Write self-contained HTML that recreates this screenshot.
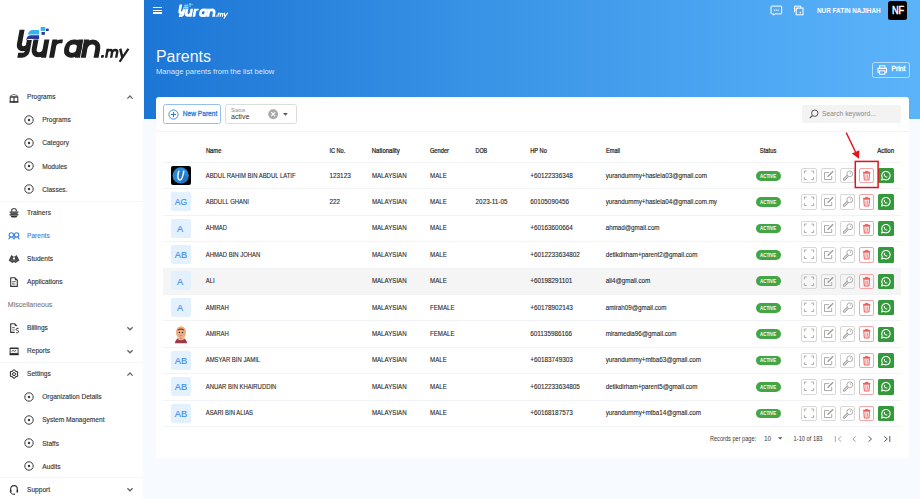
<!DOCTYPE html>
<html><head><meta charset="utf-8"><style>
html,body{margin:0;padding:0;}
body{width:920px;height:499px;overflow:hidden;position:relative;background:#fff;font-family:"Liberation Sans",sans-serif;}
.b{position:absolute;}
svg.b{overflow:visible;}
#tx{position:absolute;left:0;top:0;}
#tx text{font-family:"Liberation Sans",sans-serif;}
</style></head><body>
<div class="b" style="left:0px;top:0px;width:144px;height:499px;background:#fff;"></div>
<svg class="b" style="left:0px;top:0px" width="144" height="70" viewBox="0 0 144 70"><g transform="matrix(1,0,-0.185,1,10.675,0)" fill="none" stroke="#1f1f1f" stroke-width="5.0"><path d="M16.9 29.7 V44.2 A4.6 4.6 0 0 0 26.1 44.2 M26.1 40 V51 A4.2 4.2 0 0 1 21.9 55.2 H17.3" /><path d="M32.65 39.5 V49.35 A5.45 5.45 0 0 0 43.55 49.35 V39.5 M43.55 49 V57.7"/><path d="M51.55 57.7 V39.5"/><path d="M51.8 46.5 Q52.6 41.4 57.5 41.4 H59.6" stroke-width="3.6"/><rect x="65.1" y="42" width="12.35" height="13.2" rx="5.6"/><path d="M77.45 39.5 V57.7"/><path d="M83.25 57.7 V39.5 M83.25 48.5 A6.4 6.4 0 0 1 96.05 48.5 V57.7"/></g><g transform="matrix(1,0,-0.185,1,10.675,0)" fill="none" stroke="#1f1f1f" stroke-width="2.40"><path d="M106.1 57.7 V48.8 M106.1 52.6 A2.525 2.525 0 0 1 111.15 52.6 V57.7 M111.15 52.6 A2.525 2.525 0 0 1 116.2 52.6 V57.7"/><path d="M118.6 48.8 L122.2 57.2 M126.8 48.8 L120.4 61.8"/></g><g transform="matrix(1,0,-0.185,1,10.675,0)" fill="#1f1f1f"><rect x="100.8" y="55.1" width="2.8" height="2.6" rx="0.6"/></g><path d="M28 34.6 Q28.4 30 33 30 H39.1 V34.6 Z" fill="#35b3ee"/><path d="M26.3 40.2 Q26.6 35.3 31 35.3 H39.1 V39.1 H29.5 Q27.2 39.2 26.3 40.2 Z" fill="#2b3a9a"/><rect x="40.7" y="27" width="4.6" height="3.9" fill="#35b3ee"/><rect x="46" y="28.6" width="2.7" height="2.4" fill="#2b3a9a"/><rect x="41.5" y="32" width="3.4" height="2.8" fill="#2b3a9a"/></svg>
<svg class="b" style="left:8.5px;top:92.5px" width="11" height="10" viewBox="0 0 11 10"><path d="M1.3 2.7 Q5 0.2 8.7 2.7" fill="none" stroke="#777" stroke-width="1"/><path d="M0.9 3.5 H9.1" stroke="#555" stroke-width="0.8"/><rect x="1.2" y="4.2" width="7.6" height="4.8" fill="none" stroke="#333" stroke-width="1"/><path d="M5 4.2 V9.4" stroke="#222" stroke-width="1"/><path d="M0.7 8.9 H9.3" stroke="#222" stroke-width="1.2"/></svg>
<svg class="b" style="left:127px;top:94.9px" width="6" height="5" viewBox="0 0 6 5"><path d="M0.4 3.6 L3 1 L5.6 3.6" fill="none" stroke="#666" stroke-width="1.3"/></svg>
<svg class="b" style="left:24px;top:114.98px" width="10" height="10" viewBox="0 0 10 10"><circle cx="5" cy="5" r="4.2" fill="none" stroke="#3a3a3a" stroke-width="1"/><circle cx="5" cy="5" r="1.2" fill="#3a3a3a"/></svg>
<svg class="b" style="left:24px;top:138.06px" width="10" height="10" viewBox="0 0 10 10"><circle cx="5" cy="5" r="4.2" fill="none" stroke="#3a3a3a" stroke-width="1"/><circle cx="5" cy="5" r="1.2" fill="#3a3a3a"/></svg>
<svg class="b" style="left:24px;top:161.14px" width="10" height="10" viewBox="0 0 10 10"><circle cx="5" cy="5" r="4.2" fill="none" stroke="#3a3a3a" stroke-width="1"/><circle cx="5" cy="5" r="1.2" fill="#3a3a3a"/></svg>
<svg class="b" style="left:24px;top:184.22px" width="10" height="10" viewBox="0 0 10 10"><circle cx="5" cy="5" r="4.2" fill="none" stroke="#3a3a3a" stroke-width="1"/><circle cx="5" cy="5" r="1.2" fill="#3a3a3a"/></svg>
<svg class="b" style="left:8.5px;top:207.9px" width="11" height="10" viewBox="0 0 11 10"><path d="M2.8 3.6 V2 Q2.8 0.8 4 0.8 H6 Q7.2 0.8 7.2 2 V3.6" fill="none" stroke="#333" stroke-width="1.1"/><rect x="0.4" y="3.4" width="9.2" height="1.3" rx="0.65" fill="#333"/><rect x="1.4" y="4.6" width="7.2" height="2" fill="#555"/><rect x="0.4" y="6.3" width="9.2" height="1.1" rx="0.55" fill="#333"/><path d="M1.6 7.8 H8.4 Q8.2 9.4 6.6 9.4 H3.4 Q1.8 9.4 1.6 7.8 Z" fill="#333"/></svg>
<svg class="b" style="left:8.5px;top:230.98px" width="11" height="10" viewBox="0 0 11 10"><circle cx="2.3" cy="3.9" r="2.2" fill="none" stroke="#3d86e0" stroke-width="1.1"/><circle cx="7.6" cy="3.9" r="2.2" fill="none" stroke="#3d86e0" stroke-width="1.1"/><path d="M-0.1 7.8 L1.3 5.9 M3.3 5.9 L4.95 7.8 L6.6 5.9 M8.6 5.9 L10.1 7.8" fill="none" stroke="#3d86e0" stroke-width="1.1" stroke-linecap="round"/></svg>
<svg class="b" style="left:8.5px;top:254.06px" width="11" height="10" viewBox="0 0 11 10"><path d="M-0.3 6.6 L2.4 1 L4.2 2.6 L5.8 2.6 L7.6 1 L10.4 6.6 L8 7.9 L6.6 9 L5 8 L3.4 9 L2 7.9 Z" fill="#454545"/><circle cx="5" cy="4.4" r="1.1" fill="#fff"/><path d="M2 6.1 H8" stroke="#999" stroke-width="0.6"/></svg>
<svg class="b" style="left:8.5px;top:277.14px" width="11" height="10" viewBox="0 0 11 10"><path d="M1.7 0.8 H5.9 L8.3 3.2 V9.4 H1.7 Z" fill="none" stroke="#333" stroke-width="1.1" stroke-linejoin="round"/><path d="M5.9 0.8 L8.3 3.2 H5.9 Z" fill="#333"/><path d="M3.2 4.6 H6.6" stroke="#444" stroke-width="0.8"/><rect x="3.2" y="5.7" width="3.4" height="2.4" fill="#c4c4c4"/><path d="M4 5.6 V7.8" stroke="#555" stroke-width="0.7"/></svg>
<svg class="b" style="left:8.5px;top:323.3px" width="11" height="10" viewBox="0 0 11 10"><path d="M7.8 3 L5.8 0.8 H1.7 V9.4 H5.6" fill="none" stroke="#333" stroke-width="1.1" stroke-linejoin="round"/><path d="M5.8 0.8 L7.8 3 H5.8 Z" fill="#333"/><path d="M3.2 4.6 H5.8" stroke="#444" stroke-width="0.8"/><rect x="3.2" y="5.7" width="2.8" height="2.4" fill="#c4c4c4"/><path d="M9.6 5.3 Q7.3 5 7.1 6.3 Q7.1 7.2 8.5 7.5 Q10 7.9 9.6 9 Q9 9.9 7.2 9.7" fill="none" stroke="#333" stroke-width="1"/></svg>
<svg class="b" style="left:127px;top:325.7px" width="6" height="5" viewBox="0 0 6 5"><path d="M0.4 1.2 L3 3.8 L5.6 1.2" fill="none" stroke="#666" stroke-width="1.3"/></svg>
<svg class="b" style="left:8.5px;top:346.38px" width="11" height="10" viewBox="0 0 11 10"><rect x="1.1" y="2.4" width="8" height="5" fill="none" stroke="#444" stroke-width="1"/><path d="M1 2.2 H9.2" stroke="#222" stroke-width="1.2"/><path d="M0.5 8.4 H9.7" stroke="#222" stroke-width="1.6"/><path d="M2.8 5.6 Q3.6 3.6 4.7 4.8 Q5.7 6 7.2 4.2" fill="none" stroke="#333" stroke-width="0.9"/></svg>
<svg class="b" style="left:127px;top:348.78px" width="6" height="5" viewBox="0 0 6 5"><path d="M0.4 1.2 L3 3.8 L5.6 1.2" fill="none" stroke="#666" stroke-width="1.3"/></svg>
<svg class="b" style="left:8.5px;top:369.46px" width="11" height="10" viewBox="0 0 11 10"><path d="M3.40 2.23 Q5.00 -0.60 6.60 2.23 Q9.85 2.20 8.20 5.00 Q9.85 7.80 6.60 7.77 Q5.00 10.60 3.40 7.77 Q0.15 7.80 1.80 5.00 Q0.15 2.20 3.40 2.23 Z" fill="none" stroke="#333" stroke-width="1.1" stroke-linejoin="round"/><circle cx="5" cy="5.1" r="1.5" fill="none" stroke="#333" stroke-width="1"/></svg>
<svg class="b" style="left:127px;top:371.86px" width="6" height="5" viewBox="0 0 6 5"><path d="M0.4 3.6 L3 1 L5.6 3.6" fill="none" stroke="#666" stroke-width="1.3"/></svg>
<svg class="b" style="left:24px;top:391.94px" width="10" height="10" viewBox="0 0 10 10"><circle cx="5" cy="5" r="4.2" fill="none" stroke="#3a3a3a" stroke-width="1"/><circle cx="5" cy="5" r="1.2" fill="#3a3a3a"/></svg>
<svg class="b" style="left:24px;top:415.02px" width="10" height="10" viewBox="0 0 10 10"><circle cx="5" cy="5" r="4.2" fill="none" stroke="#3a3a3a" stroke-width="1"/><circle cx="5" cy="5" r="1.2" fill="#3a3a3a"/></svg>
<svg class="b" style="left:24px;top:438.1px" width="10" height="10" viewBox="0 0 10 10"><circle cx="5" cy="5" r="4.2" fill="none" stroke="#3a3a3a" stroke-width="1"/><circle cx="5" cy="5" r="1.2" fill="#3a3a3a"/></svg>
<svg class="b" style="left:24px;top:461.18px" width="10" height="10" viewBox="0 0 10 10"><circle cx="5" cy="5" r="4.2" fill="none" stroke="#3a3a3a" stroke-width="1"/><circle cx="5" cy="5" r="1.2" fill="#3a3a3a"/></svg>
<svg class="b" style="left:8.5px;top:484.86px" width="11" height="10" viewBox="0 0 11 10"><path d="M1.6 6.2 V4.6 Q1.6 0.6 5 0.6 Q8.4 0.6 8.4 4.6 V6.2" fill="none" stroke="#333" stroke-width="1.1"/><rect x="0.9" y="4.4" width="1.6" height="3.4" rx="0.7" fill="#333"/><rect x="7.5" y="4.4" width="1.6" height="3.4" rx="0.7" fill="#333"/><path d="M1.9 7.5 Q2.4 9.3 4.6 9.4" fill="none" stroke="#333" stroke-width="0.9"/><circle cx="5.2" cy="9.3" r="0.8" fill="#222"/></svg>
<svg class="b" style="left:127px;top:487.26px" width="6" height="5" viewBox="0 0 6 5"><path d="M0.4 1.2 L3 3.8 L5.6 1.2" fill="none" stroke="#666" stroke-width="1.3"/></svg>
<div class="b" style="left:0px;top:201px;width:143px;height:1px;background:#f4f6f9;"></div>
<div class="b" style="left:0px;top:362px;width:143px;height:1px;background:#f4f6f9;"></div>
<div class="b" style="left:0px;top:477px;width:143px;height:1px;background:#f4f6f9;"></div>
<div class="b" style="left:143px;top:0px;width:777px;height:499px;background:#f7faff;"></div>
<div class="b" style="left:144px;top:0px;width:776px;height:118.5px;background:linear-gradient(90deg,#1c76d5 0%,#3d97e8 50%,#5bb3fa 100%);"></div>
<div class="b" style="left:144px;top:118.5px;width:776px;height:1.4px;background:#fff;"></div>
<div class="b" style="left:153.4px;top:6.6499999999999995px;width:8.8px;height:1.3px;background:#fff;"></div>
<div class="b" style="left:153.4px;top:9.65px;width:8.8px;height:1.3px;background:#fff;"></div>
<div class="b" style="left:153.4px;top:12.45px;width:8.8px;height:1.3px;background:#fff;"></div>
<svg class="b" style="left:144px;top:0px" width="100" height="24" viewBox="0 0 100 24"><g transform="translate(27.188 -8.668) scale(0.44)"><g transform="matrix(1,0,-0.185,1,10.675,0)" fill="none" stroke="#fff" stroke-width="6.0"><path d="M16.9 29.7 V44.2 A4.6 4.6 0 0 0 26.1 44.2 M26.1 40 V51 A4.2 4.2 0 0 1 21.9 55.2 H17.3" /><path d="M32.65 39.5 V49.35 A5.45 5.45 0 0 0 43.55 49.35 V39.5 M43.55 49 V57.7"/><path d="M51.55 57.7 V39.5"/><path d="M51.8 46.5 Q52.6 41.4 57.5 41.4 H59.6" stroke-width="3.6"/><rect x="65.1" y="42" width="12.35" height="13.2" rx="5.6"/><path d="M77.45 39.5 V57.7"/><path d="M83.25 57.7 V39.5 M83.25 48.5 A6.4 6.4 0 0 1 96.05 48.5 V57.7"/></g><g transform="matrix(1,0,-0.185,1,10.675,0)" fill="none" stroke="#fff" stroke-width="2.88"><path d="M106.1 57.7 V48.8 M106.1 52.6 A2.525 2.525 0 0 1 111.15 52.6 V57.7 M111.15 52.6 A2.525 2.525 0 0 1 116.2 52.6 V57.7"/><path d="M118.6 48.8 L122.2 57.2 M126.8 48.8 L120.4 61.8"/></g><g transform="matrix(1,0,-0.185,1,10.675,0)" fill="#fff"><rect x="100.8" y="55.1" width="2.8" height="2.6" rx="0.6"/></g><path d="M28 34.6 Q28.4 30 33 30 H39.1 V34.6 Z" fill="#63d3ff"/><path d="M26.3 40.2 Q26.6 35.3 31 35.3 H39.1 V39.1 H29.5 Q27.2 39.2 26.3 40.2 Z" fill="#8fd8ff"/><rect x="40.7" y="27" width="4.6" height="3.9" fill="#63d3ff"/><rect x="46" y="28.6" width="2.7" height="2.4" fill="#8fd8ff"/><rect x="41.5" y="32" width="3.4" height="2.8" fill="#8fd8ff"/></g></svg>
<svg class="b" style="left:770px;top:5px" width="13" height="12" viewBox="0 0 13 12"><path d="M1.6 1.1 H11.1 Q11.7 1.1 11.7 1.7 V8.3 Q11.7 8.9 11.1 8.9 H4.9 L3.6 10.2 V8.9 H1.6 Q1 8.9 1 8.3 V1.7 Q1 1.1 1.6 1.1 Z" fill="none" stroke="#fff" stroke-width="1" stroke-linejoin="round"/><path d="M3.9 5.1 H8.9" stroke="rgba(255,255,255,0.85)" stroke-width="1.3" stroke-dasharray="1.3 0.5"/></svg>
<svg class="b" style="left:793px;top:5px" width="11" height="11" viewBox="0 0 11 11"><path d="M1.5 7.2 V1.1 H7.8 V3.1" fill="none" stroke="#fff" stroke-width="1"/><rect x="3.2" y="3.1" width="6.8" height="6.7" fill="none" stroke="#fff" stroke-width="1"/><path d="M2.8 5.6 L4.9 2.4" stroke="#fff" stroke-width="0.8"/><circle cx="7.3" cy="7.6" r="0.8" fill="#fff"/></svg>
<div class="b" style="left:888.3px;top:1px;width:19.2px;height:18.8px;background:#000;border-radius:2.5px;"></div>
<div class="b" style="left:872.1px;top:61.5px;width:37.8px;height:16px;border:1px solid rgba(255,255,255,0.55);border-radius:2.5px;box-sizing:border-box;"></div>
<svg class="b" style="left:876.5px;top:64.5px" width="10.5" height="10" viewBox="0 0 10.5 10"><rect x="2.6" y="0.8" width="5.3" height="2.6" fill="none" stroke="#fff" stroke-width="1"/><path d="M2.6 7.2 H1 V3.4 H9.5 V7.2 H7.9" fill="none" stroke="#fff" stroke-width="1.1"/><rect x="2.6" y="5.8" width="5.3" height="3.4" fill="none" stroke="#fff" stroke-width="1"/></svg>
<div class="b" style="left:155.5px;top:96.5px;width:753.5px;height:361px;background:#fff;border-radius:3px;"></div>
<div class="b" style="left:155.5px;top:130.6px;width:753.5px;height:1px;background:#f1f3f6;"></div>
<div class="b" style="left:163.2px;top:104.2px;width:58.1px;height:19.4px;border:1px solid #94bff0;border-radius:2.5px;box-sizing:border-box;"></div>
<svg class="b" style="left:167.5px;top:108.5px" width="11" height="11" viewBox="0 0 11 11"><circle cx="5.5" cy="5.5" r="4.6" fill="none" stroke="#2f7fdc" stroke-width="0.9"/><path d="M5.5 3 V8 M3 5.5 H8" stroke="#2f7fdc" stroke-width="1"/></svg>
<div class="b" style="left:225.2px;top:104.3px;width:71.5px;height:19.4px;border:1px solid #dcdcdc;border-radius:2.5px;box-sizing:border-box;"></div>
<svg class="b" style="left:268px;top:108.8px" width="10.4" height="10.4" viewBox="0 0 10.4 10.4"><circle cx="5.2" cy="5.2" r="4.9" fill="#a9a9a9"/><path d="M3.2 3.2 L7.2 7.2 M7.2 3.2 L3.2 7.2" stroke="#fff" stroke-width="1.1"/></svg>
<svg class="b" style="left:283.4px;top:112.8px" width="5" height="3" viewBox="0 0 5 3"><path d="M0 0 H4.8 L2.4 2.8 Z" fill="#555"/></svg>
<div class="b" style="left:802.3px;top:104.8px;width:98.7px;height:18.7px;background:#f3f3f3;border-radius:2px;"></div>
<svg class="b" style="left:808.5px;top:109px" width="10" height="10" viewBox="0 0 10 10"><circle cx="5.8" cy="4.2" r="3.2" fill="none" stroke="#555" stroke-width="1"/><path d="M3.5 6.5 L0.8 9.2" stroke="#555" stroke-width="1.1"/></svg>
<div class="b" style="left:163.4px;top:161.8px;width:738px;height:1px;background:#f1f3f6;"></div>
<div class="b" style="left:163.4px;top:188.23px;width:738px;height:1px;background:#f1f3f6;"></div>
<div class="b" style="left:171.1px;top:165.91px;width:19.8px;height:19.0px;background:#000;border-radius:2px;"></div>
<svg class="b" style="left:171.1px;top:165.91px" width="19.8" height="19.0" viewBox="0 0 19.8 19.0"><circle cx="9.7" cy="9.4" r="8.1" fill="#2a88d8"/><path d="M8.6 4.5 L17.5 12 A8.1 8.1 0 0 1 12 17.2 L6.5 14 Z" fill="#1c66ad" opacity="0.55"/><path d="M7.8 5.2 Q6.8 8 6.9 11 Q7.1 14.2 9.3 14 Q11.4 13.6 12.8 5.2" fill="none" stroke="#e9f0f6" stroke-width="1.6" stroke-linecap="round"/></svg>
<div class="b" style="left:755.7px;top:170.86px;width:24.9px;height:9.7px;background:#43a546;border-radius:5px;"></div>
<div class="b" style="left:801.3px;top:167.96px;width:15.5px;height:15.5px;border:1px solid #d8d8d8;border-radius:2px;box-sizing:border-box;"></div>
<div class="b" style="left:820.5px;top:167.96px;width:15.5px;height:15.5px;border:1px solid #d8d8d8;border-radius:2px;box-sizing:border-box;"></div>
<div class="b" style="left:839.7px;top:167.96px;width:15.5px;height:15.5px;border:1px solid #d8d8d8;border-radius:2px;box-sizing:border-box;"></div>
<svg class="b" style="left:801.3px;top:167.96px" width="15.5" height="15.5" viewBox="0 0 15.5 15.5"><path d="M3.4 5.4 V3.05 H5.7 M10.3 3.05 H12.6 V5.4 M12.6 9.2 V11.55 H10.3 M5.7 11.55 H3.4 V9.2" fill="none" stroke="#9c9c9c" stroke-width="0.85"/></svg>
<svg class="b" style="left:820.5px;top:167.96px" width="15.5" height="15.5" viewBox="0 0 15.5 15.5"><path d="M8.2 4.6 H3.5 V11.55 H10.7 V8" fill="none" stroke="#9c9c9c" stroke-width="0.85"/><path d="M6.6 8.7 L12.1 3.2" stroke="#9c9c9c" stroke-width="1.4"/></svg>
<svg class="b" style="left:839.7px;top:167.96px" width="15.5" height="15.5" viewBox="0 0 15.5 15.5"><path d="M8.1 7.5 L4.1 11.5" stroke="#a0a0a0" stroke-width="2.5" stroke-linecap="round"/><path d="M8.1 7.5 L4.1 11.5" stroke="#fff" stroke-width="0.9" stroke-linecap="round"/><circle cx="9.8" cy="5.8" r="2.9" fill="#fff" stroke="#a0a0a0" stroke-width="0.85"/><circle cx="10.4" cy="5.1" r="0.65" fill="#a0a0a0"/></svg>
<div class="b" style="left:858.9px;top:167.96px;width:15.3px;height:15.5px;border:1px solid #f4a5a5;border-radius:2px;box-sizing:border-box;"></div>
<svg class="b" style="left:858.9px;top:167.96px" width="15.3" height="15.5" viewBox="0 0 15.3 15.5"><path d="M4.8 5.2 H10.5 L10 12 H5.3 Z" fill="none" stroke="#ef4444" stroke-width="0.9"/><path d="M4 4.4 H11.3 M6.4 4.2 V3.4 H8.9 V4.2" fill="none" stroke="#ef4444" stroke-width="0.9"/><path d="M6.9 6.5 V10.8 M8.4 6.5 V10.8" stroke="#ef4444" stroke-width="0.6"/></svg>
<div class="b" style="left:878.2px;top:168.06px;width:15.4px;height:15.3px;background:#33993a;border-radius:1.5px;"></div>
<svg class="b" style="left:878.4px;top:167.96px" width="15" height="15.5" viewBox="0 0 15 15.5"><path d="M3.6 12 L4.3 9.7 A4.2 4.2 0 1 1 5.9 11.3 Z" fill="none" stroke="#fff" stroke-width="1.05" stroke-linejoin="round"/><path d="M5.9 6.3 Q6.2 5.6 6.7 6 L7.1 6.8 L6.8 7.3 Q7.4 8.3 8.2 8.7 L8.7 8.3 L9.4 8.7 Q9.6 9.2 9 9.5 Q7.6 9.8 6.4 8.3 Q5.6 7.2 5.9 6.3 Z" fill="#fff"/></svg>
<div class="b" style="left:163.4px;top:214.66px;width:738px;height:1px;background:#f1f3f6;"></div>
<div class="b" style="left:171.1px;top:192.22px;width:19.5px;height:19.0px;background:#e3f0fd;border-radius:2px;"></div>
<div class="b" style="left:755.7px;top:197.27px;width:24.9px;height:9.7px;background:#43a546;border-radius:5px;"></div>
<div class="b" style="left:801.3px;top:194.37px;width:15.5px;height:15.5px;border:1px solid #d8d8d8;border-radius:2px;box-sizing:border-box;"></div>
<div class="b" style="left:820.5px;top:194.37px;width:15.5px;height:15.5px;border:1px solid #d8d8d8;border-radius:2px;box-sizing:border-box;"></div>
<div class="b" style="left:839.7px;top:194.37px;width:15.5px;height:15.5px;border:1px solid #d8d8d8;border-radius:2px;box-sizing:border-box;"></div>
<svg class="b" style="left:801.3px;top:194.37px" width="15.5" height="15.5" viewBox="0 0 15.5 15.5"><path d="M3.4 5.4 V3.05 H5.7 M10.3 3.05 H12.6 V5.4 M12.6 9.2 V11.55 H10.3 M5.7 11.55 H3.4 V9.2" fill="none" stroke="#9c9c9c" stroke-width="0.85"/></svg>
<svg class="b" style="left:820.5px;top:194.37px" width="15.5" height="15.5" viewBox="0 0 15.5 15.5"><path d="M8.2 4.6 H3.5 V11.55 H10.7 V8" fill="none" stroke="#9c9c9c" stroke-width="0.85"/><path d="M6.6 8.7 L12.1 3.2" stroke="#9c9c9c" stroke-width="1.4"/></svg>
<svg class="b" style="left:839.7px;top:194.37px" width="15.5" height="15.5" viewBox="0 0 15.5 15.5"><path d="M8.1 7.5 L4.1 11.5" stroke="#a0a0a0" stroke-width="2.5" stroke-linecap="round"/><path d="M8.1 7.5 L4.1 11.5" stroke="#fff" stroke-width="0.9" stroke-linecap="round"/><circle cx="9.8" cy="5.8" r="2.9" fill="#fff" stroke="#a0a0a0" stroke-width="0.85"/><circle cx="10.4" cy="5.1" r="0.65" fill="#a0a0a0"/></svg>
<div class="b" style="left:858.9px;top:194.37px;width:15.3px;height:15.5px;border:1px solid #f4a5a5;border-radius:2px;box-sizing:border-box;"></div>
<svg class="b" style="left:858.9px;top:194.37px" width="15.3" height="15.5" viewBox="0 0 15.3 15.5"><path d="M4.8 5.2 H10.5 L10 12 H5.3 Z" fill="none" stroke="#ef4444" stroke-width="0.9"/><path d="M4 4.4 H11.3 M6.4 4.2 V3.4 H8.9 V4.2" fill="none" stroke="#ef4444" stroke-width="0.9"/><path d="M6.9 6.5 V10.8 M8.4 6.5 V10.8" stroke="#ef4444" stroke-width="0.6"/></svg>
<div class="b" style="left:878.2px;top:194.47px;width:15.4px;height:15.3px;background:#33993a;border-radius:1.5px;"></div>
<svg class="b" style="left:878.4px;top:194.37px" width="15" height="15.5" viewBox="0 0 15 15.5"><path d="M3.6 12 L4.3 9.7 A4.2 4.2 0 1 1 5.9 11.3 Z" fill="none" stroke="#fff" stroke-width="1.05" stroke-linejoin="round"/><path d="M5.9 6.3 Q6.2 5.6 6.7 6 L7.1 6.8 L6.8 7.3 Q7.4 8.3 8.2 8.7 L8.7 8.3 L9.4 8.7 Q9.6 9.2 9 9.5 Q7.6 9.8 6.4 8.3 Q5.6 7.2 5.9 6.3 Z" fill="#fff"/></svg>
<div class="b" style="left:163.4px;top:241.09px;width:738px;height:1px;background:#f1f3f6;"></div>
<div class="b" style="left:171.1px;top:218.62px;width:19.5px;height:19.0px;background:#e3f0fd;border-radius:2px;"></div>
<div class="b" style="left:755.7px;top:223.68px;width:24.9px;height:9.7px;background:#43a546;border-radius:5px;"></div>
<div class="b" style="left:801.3px;top:220.78px;width:15.5px;height:15.5px;border:1px solid #d8d8d8;border-radius:2px;box-sizing:border-box;"></div>
<div class="b" style="left:820.5px;top:220.78px;width:15.5px;height:15.5px;border:1px solid #d8d8d8;border-radius:2px;box-sizing:border-box;"></div>
<div class="b" style="left:839.7px;top:220.78px;width:15.5px;height:15.5px;border:1px solid #d8d8d8;border-radius:2px;box-sizing:border-box;"></div>
<svg class="b" style="left:801.3px;top:220.78px" width="15.5" height="15.5" viewBox="0 0 15.5 15.5"><path d="M3.4 5.4 V3.05 H5.7 M10.3 3.05 H12.6 V5.4 M12.6 9.2 V11.55 H10.3 M5.7 11.55 H3.4 V9.2" fill="none" stroke="#9c9c9c" stroke-width="0.85"/></svg>
<svg class="b" style="left:820.5px;top:220.78px" width="15.5" height="15.5" viewBox="0 0 15.5 15.5"><path d="M8.2 4.6 H3.5 V11.55 H10.7 V8" fill="none" stroke="#9c9c9c" stroke-width="0.85"/><path d="M6.6 8.7 L12.1 3.2" stroke="#9c9c9c" stroke-width="1.4"/></svg>
<svg class="b" style="left:839.7px;top:220.78px" width="15.5" height="15.5" viewBox="0 0 15.5 15.5"><path d="M8.1 7.5 L4.1 11.5" stroke="#a0a0a0" stroke-width="2.5" stroke-linecap="round"/><path d="M8.1 7.5 L4.1 11.5" stroke="#fff" stroke-width="0.9" stroke-linecap="round"/><circle cx="9.8" cy="5.8" r="2.9" fill="#fff" stroke="#a0a0a0" stroke-width="0.85"/><circle cx="10.4" cy="5.1" r="0.65" fill="#a0a0a0"/></svg>
<div class="b" style="left:858.9px;top:220.78px;width:15.3px;height:15.5px;border:1px solid #f4a5a5;border-radius:2px;box-sizing:border-box;"></div>
<svg class="b" style="left:858.9px;top:220.78px" width="15.3" height="15.5" viewBox="0 0 15.3 15.5"><path d="M4.8 5.2 H10.5 L10 12 H5.3 Z" fill="none" stroke="#ef4444" stroke-width="0.9"/><path d="M4 4.4 H11.3 M6.4 4.2 V3.4 H8.9 V4.2" fill="none" stroke="#ef4444" stroke-width="0.9"/><path d="M6.9 6.5 V10.8 M8.4 6.5 V10.8" stroke="#ef4444" stroke-width="0.6"/></svg>
<div class="b" style="left:878.2px;top:220.88px;width:15.4px;height:15.3px;background:#33993a;border-radius:1.5px;"></div>
<svg class="b" style="left:878.4px;top:220.78px" width="15" height="15.5" viewBox="0 0 15 15.5"><path d="M3.6 12 L4.3 9.7 A4.2 4.2 0 1 1 5.9 11.3 Z" fill="none" stroke="#fff" stroke-width="1.05" stroke-linejoin="round"/><path d="M5.9 6.3 Q6.2 5.6 6.7 6 L7.1 6.8 L6.8 7.3 Q7.4 8.3 8.2 8.7 L8.7 8.3 L9.4 8.7 Q9.6 9.2 9 9.5 Q7.6 9.8 6.4 8.3 Q5.6 7.2 5.9 6.3 Z" fill="#fff"/></svg>
<div class="b" style="left:163.4px;top:267.52px;width:738px;height:1px;background:#f1f3f6;"></div>
<div class="b" style="left:171.1px;top:245.04px;width:19.5px;height:19.0px;background:#e3f0fd;border-radius:2px;"></div>
<div class="b" style="left:755.7px;top:250.09px;width:24.9px;height:9.7px;background:#43a546;border-radius:5px;"></div>
<div class="b" style="left:801.3px;top:247.19px;width:15.5px;height:15.5px;border:1px solid #d8d8d8;border-radius:2px;box-sizing:border-box;"></div>
<div class="b" style="left:820.5px;top:247.19px;width:15.5px;height:15.5px;border:1px solid #d8d8d8;border-radius:2px;box-sizing:border-box;"></div>
<div class="b" style="left:839.7px;top:247.19px;width:15.5px;height:15.5px;border:1px solid #d8d8d8;border-radius:2px;box-sizing:border-box;"></div>
<svg class="b" style="left:801.3px;top:247.19px" width="15.5" height="15.5" viewBox="0 0 15.5 15.5"><path d="M3.4 5.4 V3.05 H5.7 M10.3 3.05 H12.6 V5.4 M12.6 9.2 V11.55 H10.3 M5.7 11.55 H3.4 V9.2" fill="none" stroke="#9c9c9c" stroke-width="0.85"/></svg>
<svg class="b" style="left:820.5px;top:247.19px" width="15.5" height="15.5" viewBox="0 0 15.5 15.5"><path d="M8.2 4.6 H3.5 V11.55 H10.7 V8" fill="none" stroke="#9c9c9c" stroke-width="0.85"/><path d="M6.6 8.7 L12.1 3.2" stroke="#9c9c9c" stroke-width="1.4"/></svg>
<svg class="b" style="left:839.7px;top:247.19px" width="15.5" height="15.5" viewBox="0 0 15.5 15.5"><path d="M8.1 7.5 L4.1 11.5" stroke="#a0a0a0" stroke-width="2.5" stroke-linecap="round"/><path d="M8.1 7.5 L4.1 11.5" stroke="#fff" stroke-width="0.9" stroke-linecap="round"/><circle cx="9.8" cy="5.8" r="2.9" fill="#fff" stroke="#a0a0a0" stroke-width="0.85"/><circle cx="10.4" cy="5.1" r="0.65" fill="#a0a0a0"/></svg>
<div class="b" style="left:858.9px;top:247.19px;width:15.3px;height:15.5px;border:1px solid #f4a5a5;border-radius:2px;box-sizing:border-box;"></div>
<svg class="b" style="left:858.9px;top:247.19px" width="15.3" height="15.5" viewBox="0 0 15.3 15.5"><path d="M4.8 5.2 H10.5 L10 12 H5.3 Z" fill="none" stroke="#ef4444" stroke-width="0.9"/><path d="M4 4.4 H11.3 M6.4 4.2 V3.4 H8.9 V4.2" fill="none" stroke="#ef4444" stroke-width="0.9"/><path d="M6.9 6.5 V10.8 M8.4 6.5 V10.8" stroke="#ef4444" stroke-width="0.6"/></svg>
<div class="b" style="left:878.2px;top:247.29px;width:15.4px;height:15.3px;background:#33993a;border-radius:1.5px;"></div>
<svg class="b" style="left:878.4px;top:247.19px" width="15" height="15.5" viewBox="0 0 15 15.5"><path d="M3.6 12 L4.3 9.7 A4.2 4.2 0 1 1 5.9 11.3 Z" fill="none" stroke="#fff" stroke-width="1.05" stroke-linejoin="round"/><path d="M5.9 6.3 Q6.2 5.6 6.7 6 L7.1 6.8 L6.8 7.3 Q7.4 8.3 8.2 8.7 L8.7 8.3 L9.4 8.7 Q9.6 9.2 9 9.5 Q7.6 9.8 6.4 8.3 Q5.6 7.2 5.9 6.3 Z" fill="#fff"/></svg>
<div class="b" style="left:163.4px;top:269.14px;width:738px;height:25.41px;background:#f5f5f5;"></div>
<div class="b" style="left:163.4px;top:293.95px;width:738px;height:1px;background:#f1f3f6;"></div>
<div class="b" style="left:171.1px;top:271.44px;width:19.5px;height:19.0px;background:#e3f0fd;border-radius:2px;"></div>
<div class="b" style="left:755.7px;top:276.49px;width:24.9px;height:9.7px;background:#43a546;border-radius:5px;"></div>
<div class="b" style="left:801.3px;top:273.59px;width:15.5px;height:15.5px;border:1px solid #d8d8d8;border-radius:2px;box-sizing:border-box;"></div>
<div class="b" style="left:820.5px;top:273.59px;width:15.5px;height:15.5px;border:1px solid #d8d8d8;border-radius:2px;box-sizing:border-box;"></div>
<div class="b" style="left:839.7px;top:273.59px;width:15.5px;height:15.5px;border:1px solid #d8d8d8;border-radius:2px;box-sizing:border-box;"></div>
<svg class="b" style="left:801.3px;top:273.59px" width="15.5" height="15.5" viewBox="0 0 15.5 15.5"><path d="M3.4 5.4 V3.05 H5.7 M10.3 3.05 H12.6 V5.4 M12.6 9.2 V11.55 H10.3 M5.7 11.55 H3.4 V9.2" fill="none" stroke="#9c9c9c" stroke-width="0.85"/></svg>
<svg class="b" style="left:820.5px;top:273.59px" width="15.5" height="15.5" viewBox="0 0 15.5 15.5"><path d="M8.2 4.6 H3.5 V11.55 H10.7 V8" fill="none" stroke="#9c9c9c" stroke-width="0.85"/><path d="M6.6 8.7 L12.1 3.2" stroke="#9c9c9c" stroke-width="1.4"/></svg>
<svg class="b" style="left:839.7px;top:273.59px" width="15.5" height="15.5" viewBox="0 0 15.5 15.5"><path d="M8.1 7.5 L4.1 11.5" stroke="#a0a0a0" stroke-width="2.5" stroke-linecap="round"/><path d="M8.1 7.5 L4.1 11.5" stroke="#fff" stroke-width="0.9" stroke-linecap="round"/><circle cx="9.8" cy="5.8" r="2.9" fill="#fff" stroke="#a0a0a0" stroke-width="0.85"/><circle cx="10.4" cy="5.1" r="0.65" fill="#a0a0a0"/></svg>
<div class="b" style="left:858.9px;top:273.59px;width:15.3px;height:15.5px;border:1px solid #f4a5a5;border-radius:2px;box-sizing:border-box;"></div>
<svg class="b" style="left:858.9px;top:273.59px" width="15.3" height="15.5" viewBox="0 0 15.3 15.5"><path d="M4.8 5.2 H10.5 L10 12 H5.3 Z" fill="none" stroke="#ef4444" stroke-width="0.9"/><path d="M4 4.4 H11.3 M6.4 4.2 V3.4 H8.9 V4.2" fill="none" stroke="#ef4444" stroke-width="0.9"/><path d="M6.9 6.5 V10.8 M8.4 6.5 V10.8" stroke="#ef4444" stroke-width="0.6"/></svg>
<div class="b" style="left:878.2px;top:273.69px;width:15.4px;height:15.3px;background:#33993a;border-radius:1.5px;"></div>
<svg class="b" style="left:878.4px;top:273.59px" width="15" height="15.5" viewBox="0 0 15 15.5"><path d="M3.6 12 L4.3 9.7 A4.2 4.2 0 1 1 5.9 11.3 Z" fill="none" stroke="#fff" stroke-width="1.05" stroke-linejoin="round"/><path d="M5.9 6.3 Q6.2 5.6 6.7 6 L7.1 6.8 L6.8 7.3 Q7.4 8.3 8.2 8.7 L8.7 8.3 L9.4 8.7 Q9.6 9.2 9 9.5 Q7.6 9.8 6.4 8.3 Q5.6 7.2 5.9 6.3 Z" fill="#fff"/></svg>
<div class="b" style="left:163.4px;top:320.38px;width:738px;height:1px;background:#f1f3f6;"></div>
<div class="b" style="left:171.1px;top:297.86px;width:19.5px;height:19.0px;background:#e3f0fd;border-radius:2px;"></div>
<div class="b" style="left:755.7px;top:302.9px;width:24.9px;height:9.7px;background:#43a546;border-radius:5px;"></div>
<div class="b" style="left:801.3px;top:300.0px;width:15.5px;height:15.5px;border:1px solid #d8d8d8;border-radius:2px;box-sizing:border-box;"></div>
<div class="b" style="left:820.5px;top:300.0px;width:15.5px;height:15.5px;border:1px solid #d8d8d8;border-radius:2px;box-sizing:border-box;"></div>
<div class="b" style="left:839.7px;top:300.0px;width:15.5px;height:15.5px;border:1px solid #d8d8d8;border-radius:2px;box-sizing:border-box;"></div>
<svg class="b" style="left:801.3px;top:300.0px" width="15.5" height="15.5" viewBox="0 0 15.5 15.5"><path d="M3.4 5.4 V3.05 H5.7 M10.3 3.05 H12.6 V5.4 M12.6 9.2 V11.55 H10.3 M5.7 11.55 H3.4 V9.2" fill="none" stroke="#9c9c9c" stroke-width="0.85"/></svg>
<svg class="b" style="left:820.5px;top:300.0px" width="15.5" height="15.5" viewBox="0 0 15.5 15.5"><path d="M8.2 4.6 H3.5 V11.55 H10.7 V8" fill="none" stroke="#9c9c9c" stroke-width="0.85"/><path d="M6.6 8.7 L12.1 3.2" stroke="#9c9c9c" stroke-width="1.4"/></svg>
<svg class="b" style="left:839.7px;top:300.0px" width="15.5" height="15.5" viewBox="0 0 15.5 15.5"><path d="M8.1 7.5 L4.1 11.5" stroke="#a0a0a0" stroke-width="2.5" stroke-linecap="round"/><path d="M8.1 7.5 L4.1 11.5" stroke="#fff" stroke-width="0.9" stroke-linecap="round"/><circle cx="9.8" cy="5.8" r="2.9" fill="#fff" stroke="#a0a0a0" stroke-width="0.85"/><circle cx="10.4" cy="5.1" r="0.65" fill="#a0a0a0"/></svg>
<div class="b" style="left:858.9px;top:300.0px;width:15.3px;height:15.5px;border:1px solid #f4a5a5;border-radius:2px;box-sizing:border-box;"></div>
<svg class="b" style="left:858.9px;top:300.0px" width="15.3" height="15.5" viewBox="0 0 15.3 15.5"><path d="M4.8 5.2 H10.5 L10 12 H5.3 Z" fill="none" stroke="#ef4444" stroke-width="0.9"/><path d="M4 4.4 H11.3 M6.4 4.2 V3.4 H8.9 V4.2" fill="none" stroke="#ef4444" stroke-width="0.9"/><path d="M6.9 6.5 V10.8 M8.4 6.5 V10.8" stroke="#ef4444" stroke-width="0.6"/></svg>
<div class="b" style="left:878.2px;top:300.1px;width:15.4px;height:15.3px;background:#33993a;border-radius:1.5px;"></div>
<svg class="b" style="left:878.4px;top:300.0px" width="15" height="15.5" viewBox="0 0 15 15.5"><path d="M3.6 12 L4.3 9.7 A4.2 4.2 0 1 1 5.9 11.3 Z" fill="none" stroke="#fff" stroke-width="1.05" stroke-linejoin="round"/><path d="M5.9 6.3 Q6.2 5.6 6.7 6 L7.1 6.8 L6.8 7.3 Q7.4 8.3 8.2 8.7 L8.7 8.3 L9.4 8.7 Q9.6 9.2 9 9.5 Q7.6 9.8 6.4 8.3 Q5.6 7.2 5.9 6.3 Z" fill="#fff"/></svg>
<div class="b" style="left:163.4px;top:346.81px;width:738px;height:1px;background:#f1f3f6;"></div>
<svg class="b" style="left:171px;top:324.17px" width="20" height="20" viewBox="0 0 20 20"><path d="M3.8 19.2 Q4.6 14.2 10 13.6 Q15.4 14.2 16.2 19.2 Z" fill="#9e3a46"/><ellipse cx="10" cy="8.2" rx="5" ry="6" fill="#eeaa74"/><path d="M6.3 12.5 Q10 16.5 13.7 12.5 L13.5 15 Q10 17.5 6.5 15 Z" fill="#f0b383"/><ellipse cx="9.9" cy="9" rx="3.6" ry="4.2" fill="#e7ad8a"/><path d="M6.6 5.6 Q10 3.4 13.2 5.6 L13 6.6 Q10 5 6.8 6.6 Z" fill="#8e3a3e"/><circle cx="8.4" cy="8.6" r="0.75" fill="#3a2a2a"/><circle cx="11.5" cy="8.6" r="0.75" fill="#3a2a2a"/><path d="M9 11.3 Q9.9 11.9 10.9 11.3" fill="none" stroke="#b56a55" stroke-width="0.6"/></svg>
<div class="b" style="left:755.7px;top:329.31px;width:24.9px;height:9.7px;background:#43a546;border-radius:5px;"></div>
<div class="b" style="left:801.3px;top:326.42px;width:15.5px;height:15.5px;border:1px solid #d8d8d8;border-radius:2px;box-sizing:border-box;"></div>
<div class="b" style="left:820.5px;top:326.42px;width:15.5px;height:15.5px;border:1px solid #d8d8d8;border-radius:2px;box-sizing:border-box;"></div>
<div class="b" style="left:839.7px;top:326.42px;width:15.5px;height:15.5px;border:1px solid #d8d8d8;border-radius:2px;box-sizing:border-box;"></div>
<svg class="b" style="left:801.3px;top:326.42px" width="15.5" height="15.5" viewBox="0 0 15.5 15.5"><path d="M3.4 5.4 V3.05 H5.7 M10.3 3.05 H12.6 V5.4 M12.6 9.2 V11.55 H10.3 M5.7 11.55 H3.4 V9.2" fill="none" stroke="#9c9c9c" stroke-width="0.85"/></svg>
<svg class="b" style="left:820.5px;top:326.42px" width="15.5" height="15.5" viewBox="0 0 15.5 15.5"><path d="M8.2 4.6 H3.5 V11.55 H10.7 V8" fill="none" stroke="#9c9c9c" stroke-width="0.85"/><path d="M6.6 8.7 L12.1 3.2" stroke="#9c9c9c" stroke-width="1.4"/></svg>
<svg class="b" style="left:839.7px;top:326.42px" width="15.5" height="15.5" viewBox="0 0 15.5 15.5"><path d="M8.1 7.5 L4.1 11.5" stroke="#a0a0a0" stroke-width="2.5" stroke-linecap="round"/><path d="M8.1 7.5 L4.1 11.5" stroke="#fff" stroke-width="0.9" stroke-linecap="round"/><circle cx="9.8" cy="5.8" r="2.9" fill="#fff" stroke="#a0a0a0" stroke-width="0.85"/><circle cx="10.4" cy="5.1" r="0.65" fill="#a0a0a0"/></svg>
<div class="b" style="left:858.9px;top:326.42px;width:15.3px;height:15.5px;border:1px solid #f4a5a5;border-radius:2px;box-sizing:border-box;"></div>
<svg class="b" style="left:858.9px;top:326.42px" width="15.3" height="15.5" viewBox="0 0 15.3 15.5"><path d="M4.8 5.2 H10.5 L10 12 H5.3 Z" fill="none" stroke="#ef4444" stroke-width="0.9"/><path d="M4 4.4 H11.3 M6.4 4.2 V3.4 H8.9 V4.2" fill="none" stroke="#ef4444" stroke-width="0.9"/><path d="M6.9 6.5 V10.8 M8.4 6.5 V10.8" stroke="#ef4444" stroke-width="0.6"/></svg>
<div class="b" style="left:878.2px;top:326.52px;width:15.4px;height:15.3px;background:#33993a;border-radius:1.5px;"></div>
<svg class="b" style="left:878.4px;top:326.42px" width="15" height="15.5" viewBox="0 0 15 15.5"><path d="M3.6 12 L4.3 9.7 A4.2 4.2 0 1 1 5.9 11.3 Z" fill="none" stroke="#fff" stroke-width="1.05" stroke-linejoin="round"/><path d="M5.9 6.3 Q6.2 5.6 6.7 6 L7.1 6.8 L6.8 7.3 Q7.4 8.3 8.2 8.7 L8.7 8.3 L9.4 8.7 Q9.6 9.2 9 9.5 Q7.6 9.8 6.4 8.3 Q5.6 7.2 5.9 6.3 Z" fill="#fff"/></svg>
<div class="b" style="left:163.4px;top:373.24px;width:738px;height:1px;background:#f1f3f6;"></div>
<div class="b" style="left:171.1px;top:350.68px;width:19.5px;height:19.0px;background:#e3f0fd;border-radius:2px;"></div>
<div class="b" style="left:755.7px;top:355.72px;width:24.9px;height:9.7px;background:#43a546;border-radius:5px;"></div>
<div class="b" style="left:801.3px;top:352.82px;width:15.5px;height:15.5px;border:1px solid #d8d8d8;border-radius:2px;box-sizing:border-box;"></div>
<div class="b" style="left:820.5px;top:352.82px;width:15.5px;height:15.5px;border:1px solid #d8d8d8;border-radius:2px;box-sizing:border-box;"></div>
<div class="b" style="left:839.7px;top:352.82px;width:15.5px;height:15.5px;border:1px solid #d8d8d8;border-radius:2px;box-sizing:border-box;"></div>
<svg class="b" style="left:801.3px;top:352.82px" width="15.5" height="15.5" viewBox="0 0 15.5 15.5"><path d="M3.4 5.4 V3.05 H5.7 M10.3 3.05 H12.6 V5.4 M12.6 9.2 V11.55 H10.3 M5.7 11.55 H3.4 V9.2" fill="none" stroke="#9c9c9c" stroke-width="0.85"/></svg>
<svg class="b" style="left:820.5px;top:352.82px" width="15.5" height="15.5" viewBox="0 0 15.5 15.5"><path d="M8.2 4.6 H3.5 V11.55 H10.7 V8" fill="none" stroke="#9c9c9c" stroke-width="0.85"/><path d="M6.6 8.7 L12.1 3.2" stroke="#9c9c9c" stroke-width="1.4"/></svg>
<svg class="b" style="left:839.7px;top:352.82px" width="15.5" height="15.5" viewBox="0 0 15.5 15.5"><path d="M8.1 7.5 L4.1 11.5" stroke="#a0a0a0" stroke-width="2.5" stroke-linecap="round"/><path d="M8.1 7.5 L4.1 11.5" stroke="#fff" stroke-width="0.9" stroke-linecap="round"/><circle cx="9.8" cy="5.8" r="2.9" fill="#fff" stroke="#a0a0a0" stroke-width="0.85"/><circle cx="10.4" cy="5.1" r="0.65" fill="#a0a0a0"/></svg>
<div class="b" style="left:858.9px;top:352.82px;width:15.3px;height:15.5px;border:1px solid #f4a5a5;border-radius:2px;box-sizing:border-box;"></div>
<svg class="b" style="left:858.9px;top:352.82px" width="15.3" height="15.5" viewBox="0 0 15.3 15.5"><path d="M4.8 5.2 H10.5 L10 12 H5.3 Z" fill="none" stroke="#ef4444" stroke-width="0.9"/><path d="M4 4.4 H11.3 M6.4 4.2 V3.4 H8.9 V4.2" fill="none" stroke="#ef4444" stroke-width="0.9"/><path d="M6.9 6.5 V10.8 M8.4 6.5 V10.8" stroke="#ef4444" stroke-width="0.6"/></svg>
<div class="b" style="left:878.2px;top:352.92px;width:15.4px;height:15.3px;background:#33993a;border-radius:1.5px;"></div>
<svg class="b" style="left:878.4px;top:352.82px" width="15" height="15.5" viewBox="0 0 15 15.5"><path d="M3.6 12 L4.3 9.7 A4.2 4.2 0 1 1 5.9 11.3 Z" fill="none" stroke="#fff" stroke-width="1.05" stroke-linejoin="round"/><path d="M5.9 6.3 Q6.2 5.6 6.7 6 L7.1 6.8 L6.8 7.3 Q7.4 8.3 8.2 8.7 L8.7 8.3 L9.4 8.7 Q9.6 9.2 9 9.5 Q7.6 9.8 6.4 8.3 Q5.6 7.2 5.9 6.3 Z" fill="#fff"/></svg>
<div class="b" style="left:163.4px;top:399.67px;width:738px;height:1px;background:#f1f3f6;"></div>
<div class="b" style="left:171.1px;top:377.08px;width:19.5px;height:19.0px;background:#e3f0fd;border-radius:2px;"></div>
<div class="b" style="left:755.7px;top:382.13px;width:24.9px;height:9.7px;background:#43a546;border-radius:5px;"></div>
<div class="b" style="left:801.3px;top:379.23px;width:15.5px;height:15.5px;border:1px solid #d8d8d8;border-radius:2px;box-sizing:border-box;"></div>
<div class="b" style="left:820.5px;top:379.23px;width:15.5px;height:15.5px;border:1px solid #d8d8d8;border-radius:2px;box-sizing:border-box;"></div>
<div class="b" style="left:839.7px;top:379.23px;width:15.5px;height:15.5px;border:1px solid #d8d8d8;border-radius:2px;box-sizing:border-box;"></div>
<svg class="b" style="left:801.3px;top:379.23px" width="15.5" height="15.5" viewBox="0 0 15.5 15.5"><path d="M3.4 5.4 V3.05 H5.7 M10.3 3.05 H12.6 V5.4 M12.6 9.2 V11.55 H10.3 M5.7 11.55 H3.4 V9.2" fill="none" stroke="#9c9c9c" stroke-width="0.85"/></svg>
<svg class="b" style="left:820.5px;top:379.23px" width="15.5" height="15.5" viewBox="0 0 15.5 15.5"><path d="M8.2 4.6 H3.5 V11.55 H10.7 V8" fill="none" stroke="#9c9c9c" stroke-width="0.85"/><path d="M6.6 8.7 L12.1 3.2" stroke="#9c9c9c" stroke-width="1.4"/></svg>
<svg class="b" style="left:839.7px;top:379.23px" width="15.5" height="15.5" viewBox="0 0 15.5 15.5"><path d="M8.1 7.5 L4.1 11.5" stroke="#a0a0a0" stroke-width="2.5" stroke-linecap="round"/><path d="M8.1 7.5 L4.1 11.5" stroke="#fff" stroke-width="0.9" stroke-linecap="round"/><circle cx="9.8" cy="5.8" r="2.9" fill="#fff" stroke="#a0a0a0" stroke-width="0.85"/><circle cx="10.4" cy="5.1" r="0.65" fill="#a0a0a0"/></svg>
<div class="b" style="left:858.9px;top:379.23px;width:15.3px;height:15.5px;border:1px solid #f4a5a5;border-radius:2px;box-sizing:border-box;"></div>
<svg class="b" style="left:858.9px;top:379.23px" width="15.3" height="15.5" viewBox="0 0 15.3 15.5"><path d="M4.8 5.2 H10.5 L10 12 H5.3 Z" fill="none" stroke="#ef4444" stroke-width="0.9"/><path d="M4 4.4 H11.3 M6.4 4.2 V3.4 H8.9 V4.2" fill="none" stroke="#ef4444" stroke-width="0.9"/><path d="M6.9 6.5 V10.8 M8.4 6.5 V10.8" stroke="#ef4444" stroke-width="0.6"/></svg>
<div class="b" style="left:878.2px;top:379.33px;width:15.4px;height:15.3px;background:#33993a;border-radius:1.5px;"></div>
<svg class="b" style="left:878.4px;top:379.23px" width="15" height="15.5" viewBox="0 0 15 15.5"><path d="M3.6 12 L4.3 9.7 A4.2 4.2 0 1 1 5.9 11.3 Z" fill="none" stroke="#fff" stroke-width="1.05" stroke-linejoin="round"/><path d="M5.9 6.3 Q6.2 5.6 6.7 6 L7.1 6.8 L6.8 7.3 Q7.4 8.3 8.2 8.7 L8.7 8.3 L9.4 8.7 Q9.6 9.2 9 9.5 Q7.6 9.8 6.4 8.3 Q5.6 7.2 5.9 6.3 Z" fill="#fff"/></svg>
<div class="b" style="left:163.4px;top:426.1px;width:738px;height:1px;background:#f1f3f6;"></div>
<div class="b" style="left:171.1px;top:403.5px;width:19.5px;height:19.0px;background:#e3f0fd;border-radius:2px;"></div>
<div class="b" style="left:755.7px;top:408.54px;width:24.9px;height:9.7px;background:#43a546;border-radius:5px;"></div>
<div class="b" style="left:801.3px;top:405.64px;width:15.5px;height:15.5px;border:1px solid #d8d8d8;border-radius:2px;box-sizing:border-box;"></div>
<div class="b" style="left:820.5px;top:405.64px;width:15.5px;height:15.5px;border:1px solid #d8d8d8;border-radius:2px;box-sizing:border-box;"></div>
<div class="b" style="left:839.7px;top:405.64px;width:15.5px;height:15.5px;border:1px solid #d8d8d8;border-radius:2px;box-sizing:border-box;"></div>
<svg class="b" style="left:801.3px;top:405.64px" width="15.5" height="15.5" viewBox="0 0 15.5 15.5"><path d="M3.4 5.4 V3.05 H5.7 M10.3 3.05 H12.6 V5.4 M12.6 9.2 V11.55 H10.3 M5.7 11.55 H3.4 V9.2" fill="none" stroke="#9c9c9c" stroke-width="0.85"/></svg>
<svg class="b" style="left:820.5px;top:405.64px" width="15.5" height="15.5" viewBox="0 0 15.5 15.5"><path d="M8.2 4.6 H3.5 V11.55 H10.7 V8" fill="none" stroke="#9c9c9c" stroke-width="0.85"/><path d="M6.6 8.7 L12.1 3.2" stroke="#9c9c9c" stroke-width="1.4"/></svg>
<svg class="b" style="left:839.7px;top:405.64px" width="15.5" height="15.5" viewBox="0 0 15.5 15.5"><path d="M8.1 7.5 L4.1 11.5" stroke="#a0a0a0" stroke-width="2.5" stroke-linecap="round"/><path d="M8.1 7.5 L4.1 11.5" stroke="#fff" stroke-width="0.9" stroke-linecap="round"/><circle cx="9.8" cy="5.8" r="2.9" fill="#fff" stroke="#a0a0a0" stroke-width="0.85"/><circle cx="10.4" cy="5.1" r="0.65" fill="#a0a0a0"/></svg>
<div class="b" style="left:858.9px;top:405.64px;width:15.3px;height:15.5px;border:1px solid #f4a5a5;border-radius:2px;box-sizing:border-box;"></div>
<svg class="b" style="left:858.9px;top:405.64px" width="15.3" height="15.5" viewBox="0 0 15.3 15.5"><path d="M4.8 5.2 H10.5 L10 12 H5.3 Z" fill="none" stroke="#ef4444" stroke-width="0.9"/><path d="M4 4.4 H11.3 M6.4 4.2 V3.4 H8.9 V4.2" fill="none" stroke="#ef4444" stroke-width="0.9"/><path d="M6.9 6.5 V10.8 M8.4 6.5 V10.8" stroke="#ef4444" stroke-width="0.6"/></svg>
<div class="b" style="left:878.2px;top:405.74px;width:15.4px;height:15.3px;background:#33993a;border-radius:1.5px;"></div>
<svg class="b" style="left:878.4px;top:405.64px" width="15" height="15.5" viewBox="0 0 15 15.5"><path d="M3.6 12 L4.3 9.7 A4.2 4.2 0 1 1 5.9 11.3 Z" fill="none" stroke="#fff" stroke-width="1.05" stroke-linejoin="round"/><path d="M5.9 6.3 Q6.2 5.6 6.7 6 L7.1 6.8 L6.8 7.3 Q7.4 8.3 8.2 8.7 L8.7 8.3 L9.4 8.7 Q9.6 9.2 9 9.5 Q7.6 9.8 6.4 8.3 Q5.6 7.2 5.9 6.3 Z" fill="#fff"/></svg>
<svg class="b" style="left:777.6px;top:437px" width="4.5" height="3" viewBox="0 0 4.5 3"><path d="M0 0.2 H4.4 L2.2 2.6 Z" fill="#555"/></svg>
<svg class="b" style="left:834px;top:434.5px" width="9" height="8" viewBox="0 0 9 8"><path d="M1.3 1 V7" stroke="#aaa" stroke-width="1"/><path d="M7.2 1.3 L4.2 4 L7.2 6.7" fill="none" stroke="#aaa" stroke-width="1"/></svg>
<svg class="b" style="left:851px;top:434.5px" width="7" height="8" viewBox="0 0 7 8"><path d="M4.8 1.3 L1.8 4 L4.8 6.7" fill="none" stroke="#aaa" stroke-width="1"/></svg>
<svg class="b" style="left:867.3px;top:434.5px" width="7" height="8" viewBox="0 0 7 8"><path d="M1.5 1.3 L4.5 4 L1.5 6.7" fill="none" stroke="#555" stroke-width="1"/></svg>
<svg class="b" style="left:882.5px;top:434.5px" width="9" height="8" viewBox="0 0 9 8"><path d="M1.2 1.3 L4.2 4 L1.2 6.7" fill="none" stroke="#555" stroke-width="1"/><path d="M6.8 1 V7" stroke="#555" stroke-width="1"/></svg>
<svg class="b" style="left:840px;top:125px" width="45" height="68" viewBox="0 0 45 68">
<path d="M6.2 7.6 L16.5 29" stroke="#e5141c" stroke-width="1.4" fill="none"/>
<path d="M11.8 28.5 L19.4 25.2 L19 33.7 Z" fill="#e5141c"/>
<rect x="15.3" y="36.4" width="22.8" height="26.1" fill="none" stroke="#e5141c" stroke-width="1.5"/>
</svg>
<svg id="tx" width="920" height="499" viewBox="0 0 920 499">
<text x="27.00" y="99.30" font-size="6.6" fill="#333" stroke="#333" stroke-width="0.12">Programs</text>
<text x="42.20" y="122.38" font-size="6.6" fill="#333" stroke="#333" stroke-width="0.12">Programs</text>
<text x="42.20" y="145.46" font-size="6.6" fill="#333" stroke="#333" stroke-width="0.12">Category</text>
<text x="42.20" y="168.54" font-size="6.6" fill="#333" stroke="#333" stroke-width="0.12">Modules</text>
<text x="42.20" y="191.62" font-size="6.6" fill="#333" stroke="#333" stroke-width="0.12">Classes.</text>
<text x="27.00" y="214.70" font-size="6.6" fill="#333" stroke="#333" stroke-width="0.12">Trainers</text>
<text x="27.00" y="237.78" font-size="6.6" fill="#3d86e0" stroke="#3d86e0" stroke-width="0.12">Parents</text>
<text x="27.00" y="260.86" font-size="6.6" fill="#333" stroke="#333" stroke-width="0.12">Students</text>
<text x="27.00" y="283.94" font-size="6.6" fill="#333" stroke="#333" stroke-width="0.12">Applications</text>
<text x="7.80" y="307.22" font-size="6.9" fill="#7c7c7c" stroke="#7c7c7c" stroke-width="0.1" textLength="44.60" lengthAdjust="spacingAndGlyphs">Miscellaneous</text>
<text x="27.00" y="330.10" font-size="6.6" fill="#333" stroke="#333" stroke-width="0.12">Billings</text>
<text x="27.00" y="353.18" font-size="6.6" fill="#333" stroke="#333" stroke-width="0.12">Reports</text>
<text x="27.00" y="376.26" font-size="6.6" fill="#333" stroke="#333" stroke-width="0.12">Settings</text>
<text x="42.20" y="399.34" font-size="6.6" fill="#333" stroke="#333" stroke-width="0.12">Organization Details</text>
<text x="42.20" y="422.42" font-size="6.6" fill="#333" stroke="#333" stroke-width="0.12">System Management</text>
<text x="42.20" y="445.50" font-size="6.6" fill="#333" stroke="#333" stroke-width="0.12">Staffs</text>
<text x="42.20" y="468.58" font-size="6.6" fill="#333" stroke="#333" stroke-width="0.12">Audits</text>
<text x="27.00" y="491.66" font-size="6.6" fill="#333" stroke="#333" stroke-width="0.12">Support</text>
<text x="817.00" y="12.60" font-size="6.6" fill="#fff" font-weight="700" textLength="63.60" lengthAdjust="spacingAndGlyphs">NUR FATIN NAJIHAH</text>
<text x="892.00" y="13.90" font-size="10.4" fill="#fff" stroke="#fff" stroke-width="0.45" textLength="12.20" lengthAdjust="spacingAndGlyphs">NF</text>
<text x="156.00" y="61.60" font-size="15.8" fill="#f2f7fd" textLength="54.90" lengthAdjust="spacingAndGlyphs">Parents</text>
<text x="156.00" y="74.00" font-size="7.6" fill="#dbe9f9" textLength="118.30" lengthAdjust="spacingAndGlyphs">Manage parents from the list below</text>
<text x="891.60" y="71.40" font-size="6.7" fill="#fff" stroke="#fff" stroke-width="0.3" textLength="13.90" lengthAdjust="spacingAndGlyphs">Print</text>
<text x="182.80" y="116.00" font-size="6.6" fill="#2f7fdc" stroke="#2f7fdc" stroke-width="0.3" textLength="34.50" lengthAdjust="spacingAndGlyphs">New Parent</text>
<text x="230.90" y="111.80" font-size="5.1" fill="#8a8a8a" textLength="14.40" lengthAdjust="spacingAndGlyphs">Status</text>
<text x="231.00" y="118.80" font-size="7.8" fill="#333" textLength="18.30" lengthAdjust="spacingAndGlyphs">active</text>
<text x="821.90" y="115.90" font-size="7.3" fill="#8a8a8a" textLength="54.00" lengthAdjust="spacingAndGlyphs">Search keyword...</text>
<text x="205.90" y="153.00" font-size="6.6" fill="#1e1e1e" stroke="#1e1e1e" stroke-width="0.22" textLength="15.50" lengthAdjust="spacingAndGlyphs">Name</text>
<text x="329.40" y="153.00" font-size="6.6" fill="#1e1e1e" stroke="#1e1e1e" stroke-width="0.22" textLength="15.80" lengthAdjust="spacingAndGlyphs">IC No.</text>
<text x="371.80" y="153.00" font-size="6.6" fill="#1e1e1e" stroke="#1e1e1e" stroke-width="0.22" textLength="27.90" lengthAdjust="spacingAndGlyphs">Nationality</text>
<text x="429.90" y="153.00" font-size="6.6" fill="#1e1e1e" stroke="#1e1e1e" stroke-width="0.22" textLength="19.10" lengthAdjust="spacingAndGlyphs">Gender</text>
<text x="475.50" y="153.00" font-size="6.6" fill="#1e1e1e" stroke="#1e1e1e" stroke-width="0.22" textLength="11.70" lengthAdjust="spacingAndGlyphs">DOB</text>
<text x="530.20" y="153.00" font-size="6.6" fill="#1e1e1e" stroke="#1e1e1e" stroke-width="0.22" textLength="16.70" lengthAdjust="spacingAndGlyphs">HP No</text>
<text x="606.00" y="153.00" font-size="6.6" fill="#1e1e1e" stroke="#1e1e1e" stroke-width="0.22" textLength="14.00" lengthAdjust="spacingAndGlyphs">Email</text>
<text x="759.80" y="153.00" font-size="6.6" fill="#1e1e1e" stroke="#1e1e1e" stroke-width="0.22" textLength="16.50" lengthAdjust="spacingAndGlyphs">Status</text>
<text x="877.20" y="153.00" font-size="6.6" fill="#1e1e1e" stroke="#1e1e1e" stroke-width="0.22" textLength="16.90" lengthAdjust="spacingAndGlyphs">Action</text>
<text x="205.70" y="177.61" font-size="6.8" fill="#262626" stroke="#262626" stroke-width="0.1" textLength="89.86" lengthAdjust="spacingAndGlyphs">ABDUL RAHIM BIN ABDUL LATIF</text>
<text x="329.50" y="177.61" font-size="6.8" fill="#262626" stroke="#262626" stroke-width="0.1" textLength="21.21" lengthAdjust="spacingAndGlyphs">123123</text>
<text x="371.90" y="177.61" font-size="6.8" fill="#262626" stroke="#262626" stroke-width="0.1" textLength="34.77" lengthAdjust="spacingAndGlyphs">MALAYSIAN</text>
<text x="430.00" y="177.61" font-size="6.8" fill="#262626" stroke="#262626" stroke-width="0.1" textLength="16.76" lengthAdjust="spacingAndGlyphs">MALE</text>
<text x="530.20" y="177.61" font-size="6.8" fill="#262626" stroke="#262626" stroke-width="0.1" textLength="42.61" lengthAdjust="spacingAndGlyphs">+60122336348</text>
<text x="605.70" y="177.61" font-size="6.8" fill="#262626" stroke="#262626" stroke-width="0.1" textLength="101.23" lengthAdjust="spacingAndGlyphs">yurandummy+haslela03@gmail.com</text>
<text x="760.00" y="177.61" font-size="5.4" fill="#fff" font-weight="700" textLength="16.20" lengthAdjust="spacingAndGlyphs">ACTIVE</text>
<text x="174.80" y="205.31" font-size="9.9" fill="#3b8cf0" stroke="#3b8cf0" stroke-width="0.15" textLength="12.30" lengthAdjust="spacingAndGlyphs">AG</text>
<text x="205.70" y="204.02" font-size="6.8" fill="#262626" stroke="#262626" stroke-width="0.1" textLength="43.18" lengthAdjust="spacingAndGlyphs">ABDULL GHANI</text>
<text x="329.50" y="204.02" font-size="6.8" fill="#262626" stroke="#262626" stroke-width="0.1" textLength="10.61" lengthAdjust="spacingAndGlyphs">222</text>
<text x="371.90" y="204.02" font-size="6.8" fill="#262626" stroke="#262626" stroke-width="0.1" textLength="34.77" lengthAdjust="spacingAndGlyphs">MALAYSIAN</text>
<text x="430.00" y="204.02" font-size="6.8" fill="#262626" stroke="#262626" stroke-width="0.1" textLength="16.76" lengthAdjust="spacingAndGlyphs">MALE</text>
<text x="475.60" y="204.02" font-size="6.8" fill="#262626" stroke="#262626" stroke-width="0.1" textLength="31.88" lengthAdjust="spacingAndGlyphs">2023-11-05</text>
<text x="530.20" y="204.02" font-size="6.8" fill="#262626" stroke="#262626" stroke-width="0.1" textLength="38.89" lengthAdjust="spacingAndGlyphs">60105090456</text>
<text x="605.70" y="204.02" font-size="6.8" fill="#262626" stroke="#262626" stroke-width="0.1" textLength="111.28" lengthAdjust="spacingAndGlyphs">yurandummy+haslela04@gmail.com.my</text>
<text x="760.00" y="204.02" font-size="5.4" fill="#fff" font-weight="700" textLength="16.20" lengthAdjust="spacingAndGlyphs">ACTIVE</text>
<text x="177.00" y="231.72" font-size="9.9" fill="#3b8cf0" stroke="#3b8cf0" stroke-width="0.15" textLength="6.10" lengthAdjust="spacingAndGlyphs">A</text>
<text x="205.70" y="230.43" font-size="6.8" fill="#262626" stroke="#262626" stroke-width="0.1" textLength="21.37" lengthAdjust="spacingAndGlyphs">AHMAD</text>
<text x="371.90" y="230.43" font-size="6.8" fill="#262626" stroke="#262626" stroke-width="0.1" textLength="34.77" lengthAdjust="spacingAndGlyphs">MALAYSIAN</text>
<text x="430.00" y="230.43" font-size="6.8" fill="#262626" stroke="#262626" stroke-width="0.1" textLength="16.76" lengthAdjust="spacingAndGlyphs">MALE</text>
<text x="530.20" y="230.43" font-size="6.8" fill="#262626" stroke="#262626" stroke-width="0.1" textLength="42.61" lengthAdjust="spacingAndGlyphs">+60163600664</text>
<text x="605.70" y="230.43" font-size="6.8" fill="#262626" stroke="#262626" stroke-width="0.1" textLength="53.87" lengthAdjust="spacingAndGlyphs">ahmad@gmail.com</text>
<text x="760.00" y="230.43" font-size="5.4" fill="#fff" font-weight="700" textLength="16.20" lengthAdjust="spacingAndGlyphs">ACTIVE</text>
<text x="174.80" y="258.14" font-size="9.9" fill="#3b8cf0" stroke="#3b8cf0" stroke-width="0.15" textLength="12.30" lengthAdjust="spacingAndGlyphs">AB</text>
<text x="205.70" y="256.84" font-size="6.8" fill="#262626" stroke="#262626" stroke-width="0.1" textLength="54.56" lengthAdjust="spacingAndGlyphs">AHMAD BIN JOHAN</text>
<text x="371.90" y="256.84" font-size="6.8" fill="#262626" stroke="#262626" stroke-width="0.1" textLength="34.77" lengthAdjust="spacingAndGlyphs">MALAYSIAN</text>
<text x="430.00" y="256.84" font-size="6.8" fill="#262626" stroke="#262626" stroke-width="0.1" textLength="16.76" lengthAdjust="spacingAndGlyphs">MALE</text>
<text x="530.20" y="256.84" font-size="6.8" fill="#262626" stroke="#262626" stroke-width="0.1" textLength="49.68" lengthAdjust="spacingAndGlyphs">+6012233634802</text>
<text x="605.70" y="256.84" font-size="6.8" fill="#262626" stroke="#262626" stroke-width="0.1" textLength="91.86" lengthAdjust="spacingAndGlyphs">detikdirham+parent2@gmail.com</text>
<text x="760.00" y="256.84" font-size="5.4" fill="#fff" font-weight="700" textLength="16.20" lengthAdjust="spacingAndGlyphs">ACTIVE</text>
<text x="177.00" y="284.54" font-size="9.9" fill="#3b8cf0" stroke="#3b8cf0" stroke-width="0.15" textLength="6.10" lengthAdjust="spacingAndGlyphs">A</text>
<text x="205.70" y="283.24" font-size="6.8" fill="#262626" stroke="#262626" stroke-width="0.1" textLength="8.88" lengthAdjust="spacingAndGlyphs">ALI</text>
<text x="371.90" y="283.24" font-size="6.8" fill="#262626" stroke="#262626" stroke-width="0.1" textLength="34.77" lengthAdjust="spacingAndGlyphs">MALAYSIAN</text>
<text x="430.00" y="283.24" font-size="6.8" fill="#262626" stroke="#262626" stroke-width="0.1" textLength="16.76" lengthAdjust="spacingAndGlyphs">MALE</text>
<text x="530.20" y="283.24" font-size="6.8" fill="#262626" stroke="#262626" stroke-width="0.1" textLength="42.13" lengthAdjust="spacingAndGlyphs">+60198291101</text>
<text x="605.70" y="283.24" font-size="6.8" fill="#262626" stroke="#262626" stroke-width="0.1" textLength="44.50" lengthAdjust="spacingAndGlyphs">ali4@gmail.com</text>
<text x="760.00" y="283.24" font-size="5.4" fill="#fff" font-weight="700" textLength="16.20" lengthAdjust="spacingAndGlyphs">ACTIVE</text>
<text x="177.00" y="310.95" font-size="9.9" fill="#3b8cf0" stroke="#3b8cf0" stroke-width="0.15" textLength="6.10" lengthAdjust="spacingAndGlyphs">A</text>
<text x="205.70" y="309.65" font-size="6.8" fill="#262626" stroke="#262626" stroke-width="0.1" textLength="23.01" lengthAdjust="spacingAndGlyphs">AMIRAH</text>
<text x="371.90" y="309.65" font-size="6.8" fill="#262626" stroke="#262626" stroke-width="0.1" textLength="34.77" lengthAdjust="spacingAndGlyphs">MALAYSIAN</text>
<text x="430.00" y="309.65" font-size="6.8" fill="#262626" stroke="#262626" stroke-width="0.1" textLength="24.62" lengthAdjust="spacingAndGlyphs">FEMALE</text>
<text x="530.20" y="309.65" font-size="6.8" fill="#262626" stroke="#262626" stroke-width="0.1" textLength="42.61" lengthAdjust="spacingAndGlyphs">+60178902143</text>
<text x="605.70" y="309.65" font-size="6.8" fill="#262626" stroke="#262626" stroke-width="0.1" textLength="60.80" lengthAdjust="spacingAndGlyphs">amirah09@gmail.com</text>
<text x="760.00" y="309.65" font-size="5.4" fill="#fff" font-weight="700" textLength="16.20" lengthAdjust="spacingAndGlyphs">ACTIVE</text>
<text x="205.70" y="336.06" font-size="6.8" fill="#262626" stroke="#262626" stroke-width="0.1" textLength="23.01" lengthAdjust="spacingAndGlyphs">AMIRAH</text>
<text x="371.90" y="336.06" font-size="6.8" fill="#262626" stroke="#262626" stroke-width="0.1" textLength="34.77" lengthAdjust="spacingAndGlyphs">MALAYSIAN</text>
<text x="430.00" y="336.06" font-size="6.8" fill="#262626" stroke="#262626" stroke-width="0.1" textLength="24.62" lengthAdjust="spacingAndGlyphs">FEMALE</text>
<text x="530.20" y="336.06" font-size="6.8" fill="#262626" stroke="#262626" stroke-width="0.1" textLength="41.96" lengthAdjust="spacingAndGlyphs">601135986166</text>
<text x="605.70" y="336.06" font-size="6.8" fill="#262626" stroke="#262626" stroke-width="0.1" textLength="70.86" lengthAdjust="spacingAndGlyphs">miramedia96@gmail.com</text>
<text x="760.00" y="336.06" font-size="5.4" fill="#fff" font-weight="700" textLength="16.20" lengthAdjust="spacingAndGlyphs">ACTIVE</text>
<text x="174.80" y="363.77" font-size="9.9" fill="#3b8cf0" stroke="#3b8cf0" stroke-width="0.15" textLength="12.30" lengthAdjust="spacingAndGlyphs">AB</text>
<text x="205.70" y="362.47" font-size="6.8" fill="#262626" stroke="#262626" stroke-width="0.1" textLength="54.46" lengthAdjust="spacingAndGlyphs">AMSYAR BIN JAMIL</text>
<text x="371.90" y="362.47" font-size="6.8" fill="#262626" stroke="#262626" stroke-width="0.1" textLength="34.77" lengthAdjust="spacingAndGlyphs">MALAYSIAN</text>
<text x="430.00" y="362.47" font-size="6.8" fill="#262626" stroke="#262626" stroke-width="0.1" textLength="16.76" lengthAdjust="spacingAndGlyphs">MALE</text>
<text x="530.20" y="362.47" font-size="6.8" fill="#262626" stroke="#262626" stroke-width="0.1" textLength="42.61" lengthAdjust="spacingAndGlyphs">+60183749303</text>
<text x="605.70" y="362.47" font-size="6.8" fill="#262626" stroke="#262626" stroke-width="0.1" textLength="95.32" lengthAdjust="spacingAndGlyphs">yurandummy+mtba63@gmail.com</text>
<text x="760.00" y="362.47" font-size="5.4" fill="#fff" font-weight="700" textLength="16.20" lengthAdjust="spacingAndGlyphs">ACTIVE</text>
<text x="174.80" y="390.18" font-size="9.9" fill="#3b8cf0" stroke="#3b8cf0" stroke-width="0.15" textLength="12.30" lengthAdjust="spacingAndGlyphs">AB</text>
<text x="205.70" y="388.88" font-size="6.8" fill="#262626" stroke="#262626" stroke-width="0.1" textLength="70.67" lengthAdjust="spacingAndGlyphs">ANUAR BIN KHAIRUDDIN</text>
<text x="371.90" y="388.88" font-size="6.8" fill="#262626" stroke="#262626" stroke-width="0.1" textLength="34.77" lengthAdjust="spacingAndGlyphs">MALAYSIAN</text>
<text x="430.00" y="388.88" font-size="6.8" fill="#262626" stroke="#262626" stroke-width="0.1" textLength="16.76" lengthAdjust="spacingAndGlyphs">MALE</text>
<text x="530.20" y="388.88" font-size="6.8" fill="#262626" stroke="#262626" stroke-width="0.1" textLength="49.68" lengthAdjust="spacingAndGlyphs">+6012233634805</text>
<text x="605.70" y="388.88" font-size="6.8" fill="#262626" stroke="#262626" stroke-width="0.1" textLength="91.86" lengthAdjust="spacingAndGlyphs">detikdirham+parent5@gmail.com</text>
<text x="760.00" y="388.88" font-size="5.4" fill="#fff" font-weight="700" textLength="16.20" lengthAdjust="spacingAndGlyphs">ACTIVE</text>
<text x="174.80" y="416.59" font-size="9.9" fill="#3b8cf0" stroke="#3b8cf0" stroke-width="0.15" textLength="12.30" lengthAdjust="spacingAndGlyphs">AB</text>
<text x="205.70" y="415.29" font-size="6.8" fill="#262626" stroke="#262626" stroke-width="0.1" textLength="47.35" lengthAdjust="spacingAndGlyphs">ASARI BIN ALIAS</text>
<text x="371.90" y="415.29" font-size="6.8" fill="#262626" stroke="#262626" stroke-width="0.1" textLength="34.77" lengthAdjust="spacingAndGlyphs">MALAYSIAN</text>
<text x="430.00" y="415.29" font-size="6.8" fill="#262626" stroke="#262626" stroke-width="0.1" textLength="16.76" lengthAdjust="spacingAndGlyphs">MALE</text>
<text x="530.20" y="415.29" font-size="6.8" fill="#262626" stroke="#262626" stroke-width="0.1" textLength="42.61" lengthAdjust="spacingAndGlyphs">+60168187573</text>
<text x="605.70" y="415.29" font-size="6.8" fill="#262626" stroke="#262626" stroke-width="0.1" textLength="95.32" lengthAdjust="spacingAndGlyphs">yurandummy+mtba14@gmail.com</text>
<text x="760.00" y="415.29" font-size="5.4" fill="#fff" font-weight="700" textLength="16.20" lengthAdjust="spacingAndGlyphs">ACTIVE</text>
<text x="709.90" y="440.80" font-size="6.4" fill="#3a3a3a" textLength="46.30" lengthAdjust="spacingAndGlyphs">Records per page:</text>
<text x="764.00" y="440.90" font-size="7.8" fill="#444" textLength="7.20" lengthAdjust="spacingAndGlyphs">10</text>
<text x="793.60" y="440.60" font-size="6.3" fill="#333" textLength="28.90" lengthAdjust="spacingAndGlyphs">1-10 of 183</text>
</svg>
</body></html>
